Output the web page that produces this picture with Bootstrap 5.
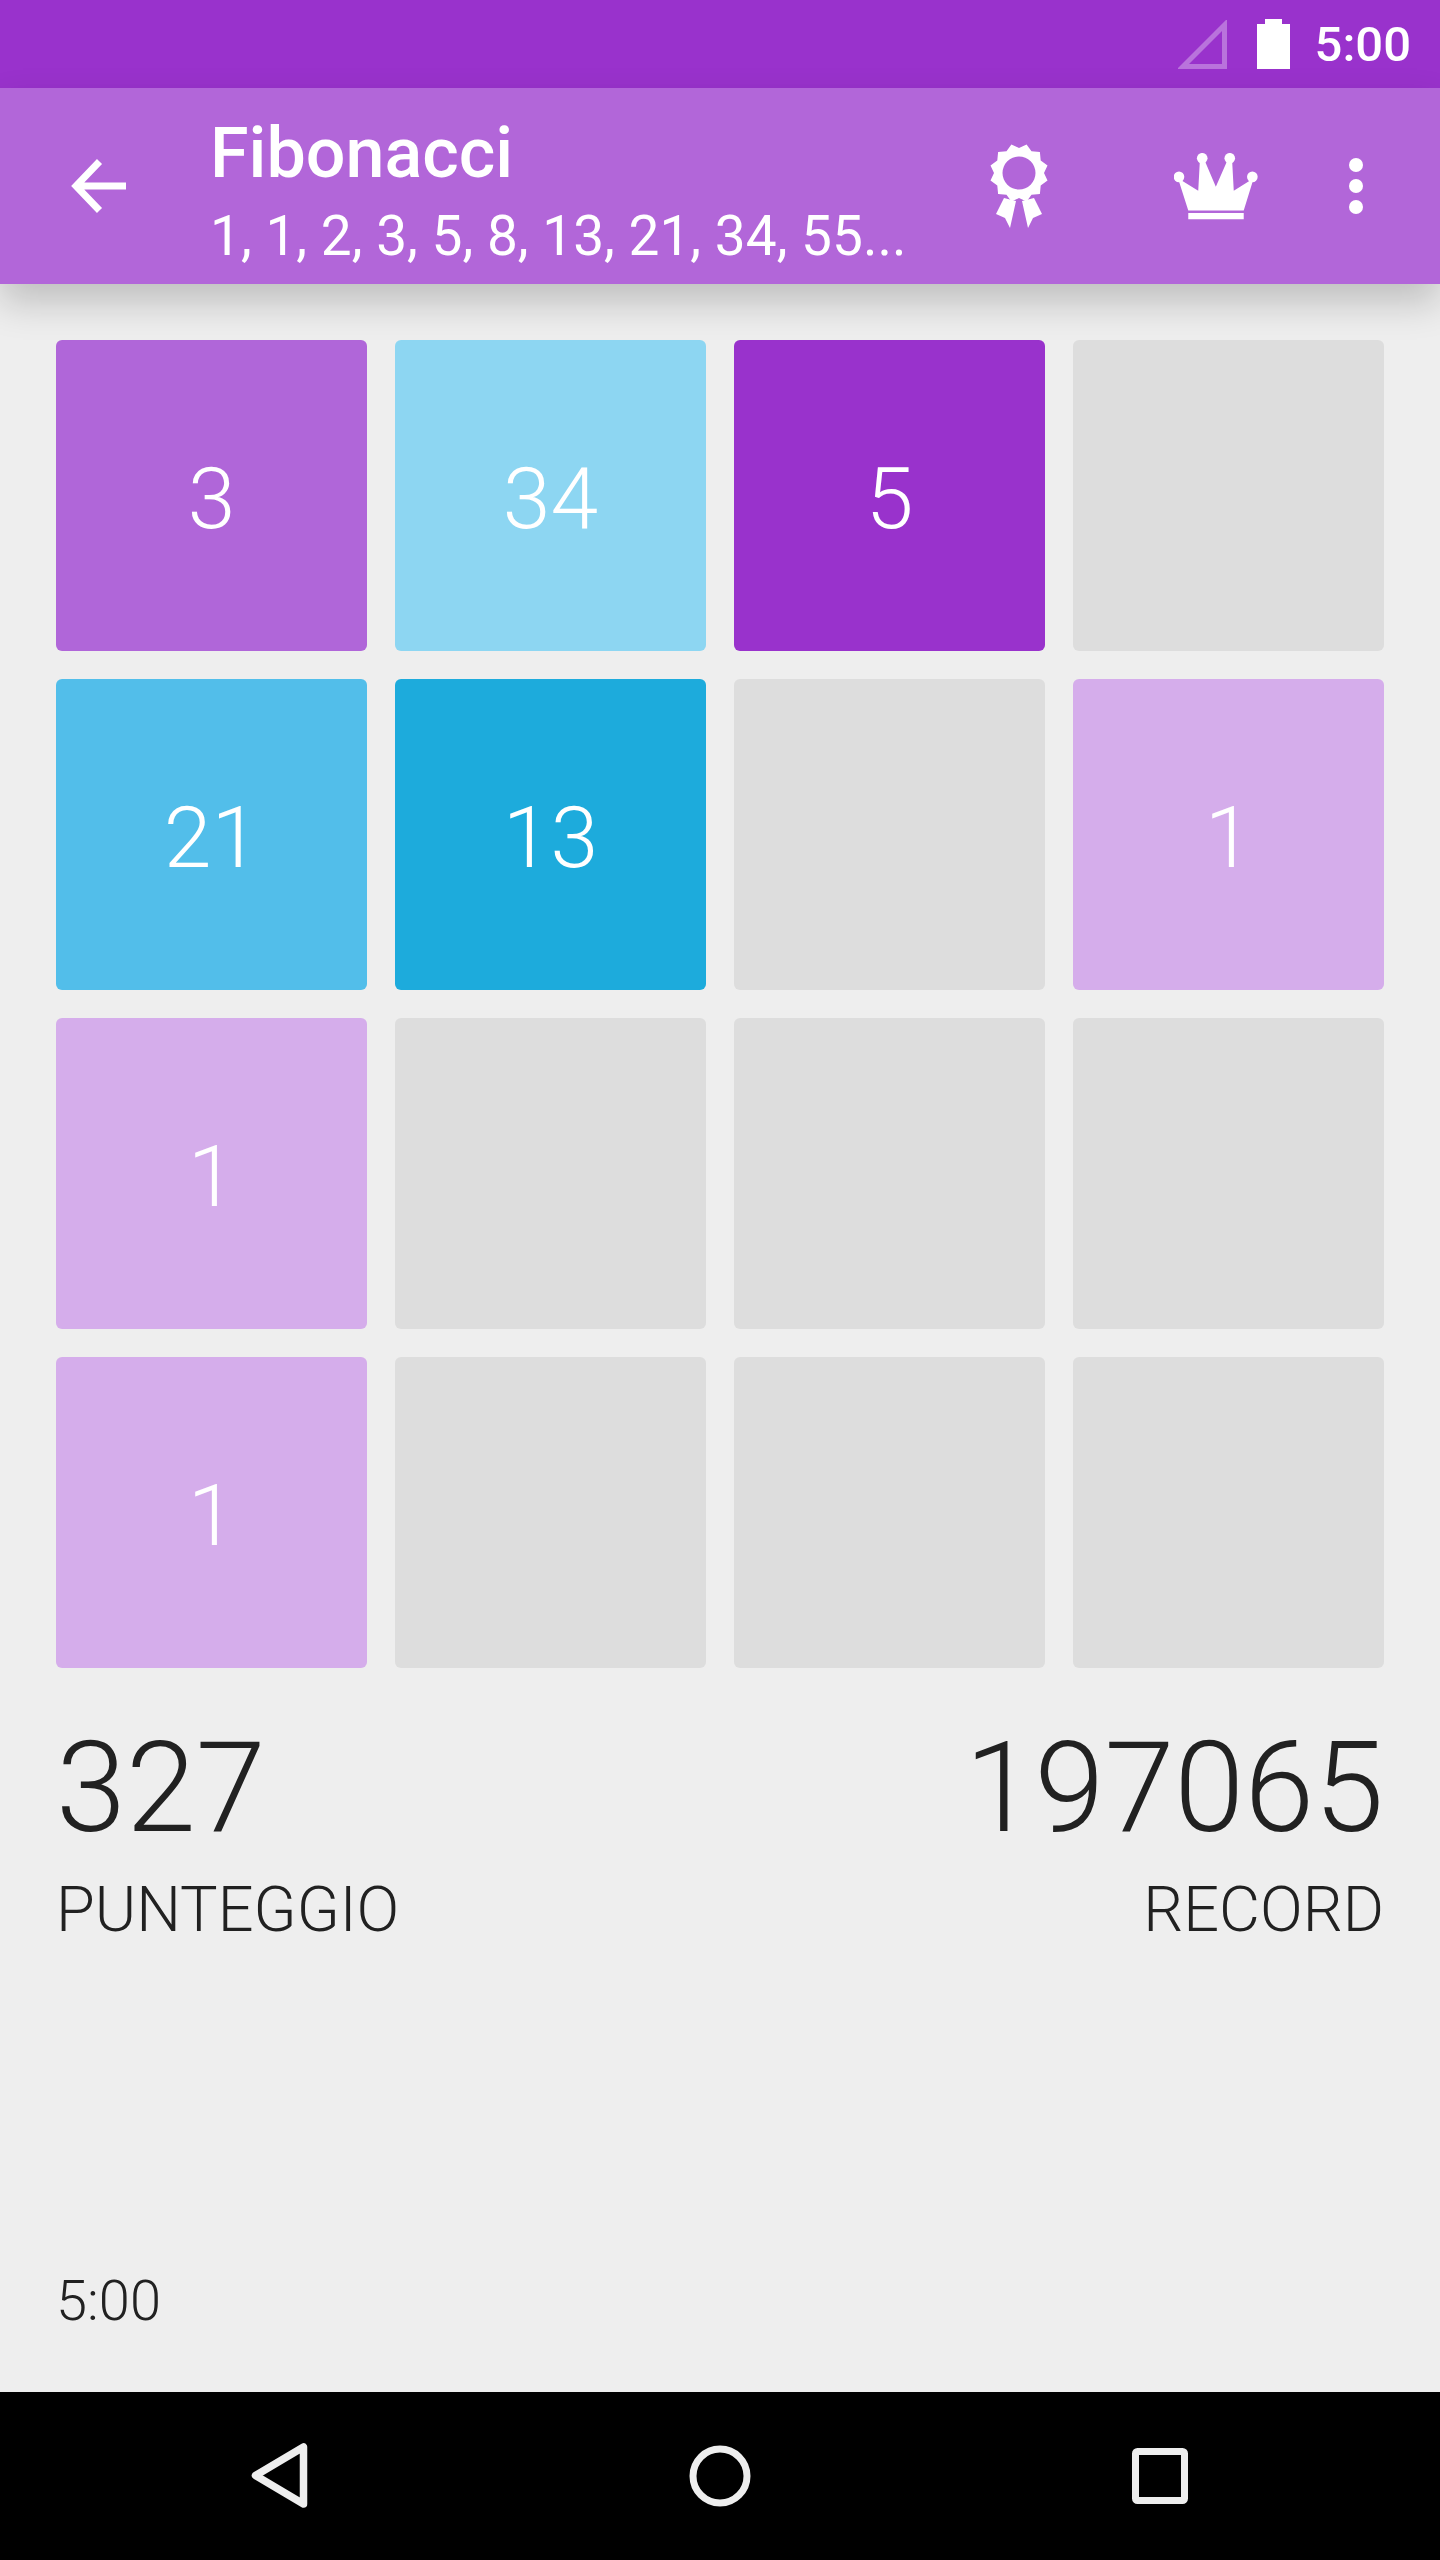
<!doctype html>
<html lang="it">
<head>
<meta charset="utf-8">
<title>Fibonacci</title>
<link rel="stylesheet" href="https://cdn.jsdelivr.net/npm/bootstrap@5.3.0/dist/css/bootstrap.min.css">
<style>
html,body{height:100%}
body{background:#eee;font-family:Roboto,"Liberation Sans",sans-serif;color:#212121}
.phone{width:1440px;height:2560px;overflow:hidden}
.sysbar{height:88px;background:#9932cc;padding-right:29px;color:#fff}
.sysbar svg{display:block}
.sys-sig{margin-right:30px}
.sys-bat{margin-right:25px}
.sys-time{font-size:49px;font-weight:500;line-height:1}
.appbar{height:196px;background:#b266d9;padding:0 77px 0 71px;color:#fff;box-shadow:0 18px 36px rgba(0,0,0,.2);z-index:2}
.title-box{margin-left:84px;padding-top:20px}
.app-title{font-size:70px;font-weight:500;line-height:80px}
.app-sub{font-size:55px;font-weight:400;line-height:86px;white-space:nowrap}
.ic-rosette{margin-right:126px}
.ic-crown{margin-right:91px}
.content{padding:56px 56px 0}
.board{display:grid;grid-template-columns:repeat(4,311px);grid-auto-rows:311px;gap:28px}
.tile{border-radius:6px;background:#ddd;color:#fff;font-size:86px;font-weight:300;padding-top:6px}
.t1{background:#d5adeb}.t3{background:#b066d9}.t5{background:#9932cc}
.t13{background:#1dabdc}.t21{background:#52beea}.t34{background:#8dd6f2}
.scores{margin-top:45px;font-weight:300}
.score-num{font-size:126px;line-height:150px}
.score-lab{font-size:63px;line-height:70px;margin-top:12px}
.clock{font-size:56px;font-weight:300;line-height:66px;padding-bottom:58px}
.navkeys{height:168px;background:#000}
.navkeys svg{display:block}
</style>
</head>
<body>
<div class="phone d-flex flex-column">
  <div class="sysbar d-flex align-items-center justify-content-end">
    <svg class="sys-sig" width="49" height="49" viewBox="0 0 49 49"><path d="M46.500 5V46.500H5Z" fill="none" stroke="#fff" stroke-opacity=".32" stroke-width="5"/></svg>
    <svg class="sys-bat" width="33" height="50" viewBox="0 0 33 50"><path d="M8 0H25V5H33V50H0V5H8Z" fill="#fff"/></svg>
    <span class="sys-time">5:00</span>
  </div>
  <div class="appbar d-flex align-items-center position-relative">
    <svg width="55" height="54" viewBox="0 0 55 54"><path d="M55 27H5M28.500 2.500 5 27l23.500 24.500" fill="none" stroke="#fff" stroke-width="7"/></svg>
    <div class="title-box flex-grow-1">
      <div class="app-title">Fibonacci</div>
      <div class="app-sub">1, 1, 2, 3, 5, 8, 13, 21, 34, 55...</div>
    </div>
    <svg class="ic-rosette" width="58" height="84" viewBox="-29 -29 58 84">
      <path d="M-15 25-3 28-9 55-14 45-23 41ZM15 25 3 28 9 55 14 45 23 41Z" fill="#fff"/>
      <path d="M0-25 7.600-28.500 12.500-21.700 20.900-20.900 21.700-12.500 28.500-7.600 25 0 28.500 7.600 21.700 12.500 20.900 20.900 12.500 21.700 7.600 28.500 0 25-7.600 28.500-12.500 21.700-20.900 20.900-21.700 12.500-28.500 7.600-25 0-28.500-7.600-21.700-12.500-20.900-20.900-12.500-21.700-7.600-28.500ZM16.500 0A16.500 16.500 0 1 0-16.500 0 16.500 16.500 0 1 0 16.500 0Z" fill="#fff" fill-rule="evenodd"/>
    </svg>
    <svg class="ic-crown" width="84" height="67" viewBox="672 97 253 200">
      <g fill="#fff"><circle cx="687" cy="168" r="16"/><circle cx="757" cy="112" r="16"/><circle cx="840" cy="112" r="16"/><circle cx="908" cy="168" r="16"/>
      <path d="M684 172 745 210 750 118H764L798 198 833 118H847L852 210 912 172 882 269H715ZM715 277H882V296H715Z"/></g>
    </svg>
    <svg width="14" height="56" viewBox="0 0 14 56"><g fill="#fff"><circle cx="7" cy="7" r="7"/><circle cx="7" cy="28" r="7"/><circle cx="7" cy="49" r="7"/></g></svg>
  </div>
  <main class="content flex-grow-1 d-flex flex-column">
    <div class="board">
      <div class="tile t3 d-flex align-items-center justify-content-center">3</div>
      <div class="tile t34 d-flex align-items-center justify-content-center">34</div>
      <div class="tile t5 d-flex align-items-center justify-content-center">5</div>
      <div class="tile"></div>
      <div class="tile t21 d-flex align-items-center justify-content-center">21</div>
      <div class="tile t13 d-flex align-items-center justify-content-center">13</div>
      <div class="tile"></div>
      <div class="tile t1 d-flex align-items-center justify-content-center">1</div>
      <div class="tile t1 d-flex align-items-center justify-content-center">1</div>
      <div class="tile"></div><div class="tile"></div><div class="tile"></div>
      <div class="tile t1 d-flex align-items-center justify-content-center">1</div>
      <div class="tile"></div><div class="tile"></div><div class="tile"></div>
    </div>
    <div class="scores d-flex justify-content-between">
      <div><div class="score-num">327</div><div class="score-lab">PUNTEGGIO</div></div>
      <div class="text-end"><div class="score-num">197065</div><div class="score-lab">RECORD</div></div>
    </div>
    <div class="clock mt-auto">5:00</div>
  </main>
  <div class="navkeys d-flex align-items-center">
    <svg width="1440" height="168" viewBox="0 2392 1440 168">
      <path d="M303.500 2447V2504L255.500 2475.500Z" fill="none" stroke="#eee" stroke-width="7.500" stroke-linejoin="round"/>
      <circle cx="720" cy="2476" r="27" fill="none" stroke="#eee" stroke-width="7"/>
      <rect x="1135.500" y="2451.500" width="49" height="49" rx="2" fill="none" stroke="#eee" stroke-width="7"/>
    </svg>
  </div>
</div>
</body>
</html>
